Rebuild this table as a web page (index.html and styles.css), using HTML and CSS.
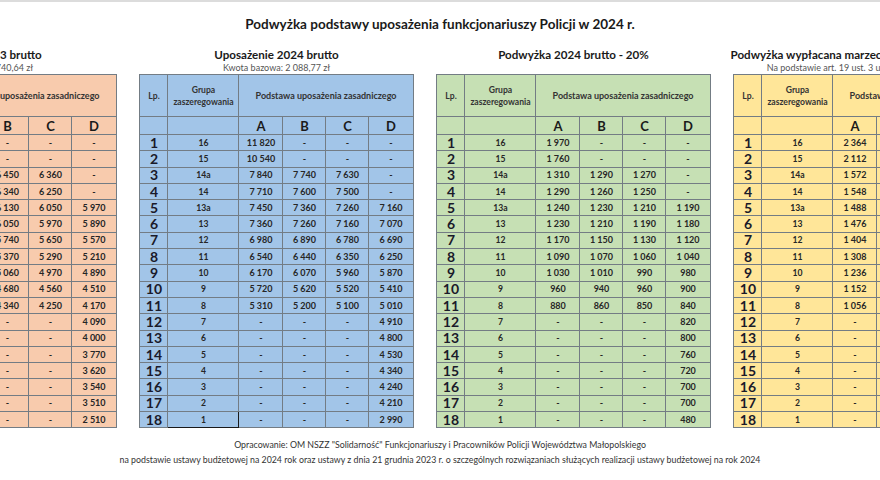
FILE: index.html
```html
<!DOCTYPE html>
<html lang="pl">
<head>
<meta charset="utf-8">
<title>Podwyżka podstawy uposażenia funkcjonariuszy Policji w 2024 r.</title>
<link rel="stylesheet" href="styles.css">
</head>
<body>
<div class="page">
  <h1 class="title">Podwyżka podstawy uposażenia funkcjonariuszy Policji w 2024 r.</h1>
  <div class="tables">
    <section class="block orange">
      <h2 class="caption">Uposażenie 2023 brutto</h2>
      <p class="sub">Kwota bazowa: 1 740,64 zł</p>
      <table class="grid">
        <colgroup><col class="c-lp"><col class="c-gr"><col class="c-a"><col class="c-b"><col class="c-c"><col class="c-d"></colgroup>
        <thead>
          <tr class="h1"><th>Lp.</th><th>Grupa zaszeregowania</th><th colspan="4">Podstawa uposażenia zasadniczego</th></tr>
          <tr class="h2"><th></th><th></th><th>A</th><th>B</th><th>C</th><th>D</th></tr>
        </thead>
        <tbody>
          <tr><td class="lp">1</td><td class="gr">16</td><td>9 850</td><td>-</td><td>-</td><td>-</td></tr>
          <tr><td class="lp">2</td><td class="gr">15</td><td>8 780</td><td>-</td><td>-</td><td>-</td></tr>
          <tr><td class="lp">3</td><td class="gr">14a</td><td>6 530</td><td>6 450</td><td>6 360</td><td>-</td></tr>
          <tr><td class="lp">4</td><td class="gr">14</td><td>6 430</td><td>6 340</td><td>6 250</td><td>-</td></tr>
          <tr><td class="lp">5</td><td class="gr">13a</td><td>6 210</td><td>6 130</td><td>6 050</td><td>5 970</td></tr>
          <tr><td class="lp">6</td><td class="gr">13</td><td>6 130</td><td>6 050</td><td>5 970</td><td>5 890</td></tr>
          <tr><td class="lp">7</td><td class="gr">12</td><td>5 820</td><td>5 740</td><td>5 650</td><td>5 570</td></tr>
          <tr><td class="lp">8</td><td class="gr">11</td><td>5 450</td><td>5 370</td><td>5 290</td><td>5 210</td></tr>
          <tr><td class="lp">9</td><td class="gr">10</td><td>5 140</td><td>5 060</td><td>4 970</td><td>4 890</td></tr>
          <tr><td class="lp">10</td><td class="gr">9</td><td>4 770</td><td>4 680</td><td>4 560</td><td>4 510</td></tr>
          <tr><td class="lp">11</td><td class="gr">8</td><td>4 430</td><td>4 340</td><td>4 250</td><td>4 170</td></tr>
          <tr><td class="lp">12</td><td class="gr">7</td><td>-</td><td>-</td><td>-</td><td>4 090</td></tr>
          <tr><td class="lp">13</td><td class="gr">6</td><td>-</td><td>-</td><td>-</td><td>4 000</td></tr>
          <tr><td class="lp">14</td><td class="gr">5</td><td>-</td><td>-</td><td>-</td><td>3 770</td></tr>
          <tr><td class="lp">15</td><td class="gr">4</td><td>-</td><td>-</td><td>-</td><td>3 620</td></tr>
          <tr><td class="lp">16</td><td class="gr">3</td><td>-</td><td>-</td><td>-</td><td>3 540</td></tr>
          <tr><td class="lp">17</td><td class="gr">2</td><td>-</td><td>-</td><td>-</td><td>3 510</td></tr>
          <tr><td class="lp">18</td><td class="gr">1</td><td>-</td><td>-</td><td>-</td><td>2 510</td></tr>
        </tbody>
      </table>
    </section>

    <section class="block blue">
      <h2 class="caption">Uposażenie 2024 brutto</h2>
      <p class="sub">Kwota bazowa: 2 088,77 zł</p>
      <table class="grid">
        <colgroup><col class="c-lp"><col class="c-gr"><col class="c-a"><col class="c-b"><col class="c-c"><col class="c-d"></colgroup>
        <thead>
          <tr class="h1"><th>Lp.</th><th>Grupa zaszeregowania</th><th colspan="4">Podstawa uposażenia zasadniczego</th></tr>
          <tr class="h2"><th></th><th></th><th>A</th><th>B</th><th>C</th><th>D</th></tr>
        </thead>
        <tbody>
          <tr><td class="lp">1</td><td class="gr">16</td><td>11 820</td><td>-</td><td>-</td><td>-</td></tr>
          <tr><td class="lp">2</td><td class="gr">15</td><td>10 540</td><td>-</td><td>-</td><td>-</td></tr>
          <tr><td class="lp">3</td><td class="gr">14a</td><td>7 840</td><td>7 740</td><td>7 630</td><td>-</td></tr>
          <tr><td class="lp">4</td><td class="gr">14</td><td>7 710</td><td>7 600</td><td>7 500</td><td>-</td></tr>
          <tr><td class="lp">5</td><td class="gr">13a</td><td>7 450</td><td>7 360</td><td>7 260</td><td>7 160</td></tr>
          <tr><td class="lp">6</td><td class="gr">13</td><td>7 360</td><td>7 260</td><td>7 160</td><td>7 070</td></tr>
          <tr><td class="lp">7</td><td class="gr">12</td><td>6 980</td><td>6 890</td><td>6 780</td><td>6 690</td></tr>
          <tr><td class="lp">8</td><td class="gr">11</td><td>6 540</td><td>6 440</td><td>6 350</td><td>6 250</td></tr>
          <tr><td class="lp">9</td><td class="gr">10</td><td>6 170</td><td>6 070</td><td>5 960</td><td>5 870</td></tr>
          <tr><td class="lp">10</td><td class="gr">9</td><td>5 720</td><td>5 620</td><td>5 520</td><td>5 410</td></tr>
          <tr><td class="lp">11</td><td class="gr">8</td><td>5 310</td><td>5 200</td><td>5 100</td><td>5 010</td></tr>
          <tr><td class="lp">12</td><td class="gr">7</td><td>-</td><td>-</td><td>-</td><td>4 910</td></tr>
          <tr><td class="lp">13</td><td class="gr">6</td><td>-</td><td>-</td><td>-</td><td>4 800</td></tr>
          <tr><td class="lp">14</td><td class="gr">5</td><td>-</td><td>-</td><td>-</td><td>4 530</td></tr>
          <tr><td class="lp">15</td><td class="gr">4</td><td>-</td><td>-</td><td>-</td><td>4 340</td></tr>
          <tr><td class="lp">16</td><td class="gr">3</td><td>-</td><td>-</td><td>-</td><td>4 240</td></tr>
          <tr><td class="lp">17</td><td class="gr">2</td><td>-</td><td>-</td><td>-</td><td>4 210</td></tr>
          <tr><td class="lp">18</td><td class="gr selected">1</td><td>-</td><td>-</td><td>-</td><td>2 990</td></tr>
        </tbody>
      </table>
    </section>

    <section class="block green">
      <h2 class="caption">Podwyżka 2024 brutto - 20%</h2>
      <p class="sub"></p>
      <table class="grid">
        <colgroup><col class="c-lp"><col class="c-gr"><col class="c-a"><col class="c-b"><col class="c-c"><col class="c-d"></colgroup>
        <thead>
          <tr class="h1"><th>Lp.</th><th>Grupa zaszeregowania</th><th colspan="4">Podstawa uposażenia zasadniczego</th></tr>
          <tr class="h2"><th></th><th></th><th>A</th><th>B</th><th>C</th><th>D</th></tr>
        </thead>
        <tbody>
          <tr><td class="lp">1</td><td class="gr">16</td><td>1 970</td><td>-</td><td>-</td><td>-</td></tr>
          <tr><td class="lp">2</td><td class="gr">15</td><td>1 760</td><td>-</td><td>-</td><td>-</td></tr>
          <tr><td class="lp">3</td><td class="gr">14a</td><td>1 310</td><td>1 290</td><td>1 270</td><td>-</td></tr>
          <tr><td class="lp">4</td><td class="gr">14</td><td>1 290</td><td>1 260</td><td>1 250</td><td>-</td></tr>
          <tr><td class="lp">5</td><td class="gr">13a</td><td>1 240</td><td>1 230</td><td>1 210</td><td>1 190</td></tr>
          <tr><td class="lp">6</td><td class="gr">13</td><td>1 230</td><td>1 210</td><td>1 190</td><td>1 180</td></tr>
          <tr><td class="lp">7</td><td class="gr">12</td><td>1 170</td><td>1 150</td><td>1 130</td><td>1 120</td></tr>
          <tr><td class="lp">8</td><td class="gr">11</td><td>1 090</td><td>1 070</td><td>1 060</td><td>1 040</td></tr>
          <tr><td class="lp">9</td><td class="gr">10</td><td>1 030</td><td>1 010</td><td>990</td><td>980</td></tr>
          <tr><td class="lp">10</td><td class="gr">9</td><td>960</td><td>940</td><td>960</td><td>900</td></tr>
          <tr><td class="lp">11</td><td class="gr">8</td><td>880</td><td>860</td><td>850</td><td>840</td></tr>
          <tr><td class="lp">12</td><td class="gr">7</td><td>-</td><td>-</td><td>-</td><td>820</td></tr>
          <tr><td class="lp">13</td><td class="gr">6</td><td>-</td><td>-</td><td>-</td><td>800</td></tr>
          <tr><td class="lp">14</td><td class="gr">5</td><td>-</td><td>-</td><td>-</td><td>760</td></tr>
          <tr><td class="lp">15</td><td class="gr">4</td><td>-</td><td>-</td><td>-</td><td>720</td></tr>
          <tr><td class="lp">16</td><td class="gr">3</td><td>-</td><td>-</td><td>-</td><td>700</td></tr>
          <tr><td class="lp">17</td><td class="gr">2</td><td>-</td><td>-</td><td>-</td><td>700</td></tr>
          <tr><td class="lp">18</td><td class="gr">1</td><td>-</td><td>-</td><td>-</td><td>480</td></tr>
        </tbody>
      </table>
    </section>

    <section class="block yellow">
      <h2 class="caption">Podwyżka wypłacana marzec-grudzień 2024 r. (brutto)</h2>
      <p class="sub">Na podstawie art. 19 ust. 3 ustawy okołobudżetowej</p>
      <table class="grid">
        <colgroup><col class="c-lp"><col class="c-gr"><col class="c-a"><col class="c-b"><col class="c-c"><col class="c-d"></colgroup>
        <thead>
          <tr class="h1"><th>Lp.</th><th>Grupa zaszeregowania</th><th colspan="4">Podstawa uposażenia zasadniczego</th></tr>
          <tr class="h2"><th></th><th></th><th>A</th><th>B</th><th>C</th><th>D</th></tr>
        </thead>
        <tbody>
          <tr><td class="lp">1</td><td class="gr">16</td><td>2 364</td><td>-</td><td>-</td><td>-</td></tr>
          <tr><td class="lp">2</td><td class="gr">15</td><td>2 112</td><td>-</td><td>-</td><td>-</td></tr>
          <tr><td class="lp">3</td><td class="gr">14a</td><td>1 572</td><td>1 548</td><td>1 524</td><td>-</td></tr>
          <tr><td class="lp">4</td><td class="gr">14</td><td>1 548</td><td>1 512</td><td>1 500</td><td>-</td></tr>
          <tr><td class="lp">5</td><td class="gr">13a</td><td>1 488</td><td>1 476</td><td>1 452</td><td>1 428</td></tr>
          <tr><td class="lp">6</td><td class="gr">13</td><td>1 476</td><td>1 452</td><td>1 428</td><td>1 416</td></tr>
          <tr><td class="lp">7</td><td class="gr">12</td><td>1 404</td><td>1 380</td><td>1 356</td><td>1 344</td></tr>
          <tr><td class="lp">8</td><td class="gr">11</td><td>1 308</td><td>1 284</td><td>1 272</td><td>1 248</td></tr>
          <tr><td class="lp">9</td><td class="gr">10</td><td>1 236</td><td>1 212</td><td>1 188</td><td>1 176</td></tr>
          <tr><td class="lp">10</td><td class="gr">9</td><td>1 152</td><td>1 128</td><td>1 152</td><td>1 080</td></tr>
          <tr><td class="lp">11</td><td class="gr">8</td><td>1 056</td><td>1 032</td><td>1 020</td><td>1 008</td></tr>
          <tr><td class="lp">12</td><td class="gr">7</td><td>-</td><td>-</td><td>-</td><td>984</td></tr>
          <tr><td class="lp">13</td><td class="gr">6</td><td>-</td><td>-</td><td>-</td><td>960</td></tr>
          <tr><td class="lp">14</td><td class="gr">5</td><td>-</td><td>-</td><td>-</td><td>912</td></tr>
          <tr><td class="lp">15</td><td class="gr">4</td><td>-</td><td>-</td><td>-</td><td>864</td></tr>
          <tr><td class="lp">16</td><td class="gr">3</td><td>-</td><td>-</td><td>-</td><td>840</td></tr>
          <tr><td class="lp">17</td><td class="gr">2</td><td>-</td><td>-</td><td>-</td><td>840</td></tr>
          <tr><td class="lp">18</td><td class="gr">1</td><td>-</td><td>-</td><td>-</td><td>576</td></tr>
        </tbody>
      </table>
    </section>
  </div>
  <footer class="footer">
    <p>Opracowanie: OM NSZZ "Solidarność" Funkcjonariuszy i Pracowników Policji Województwa Małopolskiego</p>
    <p>na podstawie ustawy budżetowej na 2024 rok oraz ustawy z dnia 21 grudnia 2023 r. o szczególnych rozwiązaniach służących realizacji ustawy budżetowej na rok 2024</p>
  </footer>
</div>
</body>
</html>
```

FILE: styles.css
```css
html, body {
  margin: 0;
  padding: 0;
  background: #ffffff;
}
body {
  width: 880px;
  height: 480px;
  overflow: hidden;
  font-family: Lato, "Open Sans", "Liberation Sans", sans-serif;
  color: #1e1e1e;
}
.page {
  border-top: 2px solid #dcdcdc;
  height: 478px;
  display: flex;
  flex-direction: column;
}
.title {
  margin: 13px 0 0 0;
  text-align: center;
  font-size: 13.5px;
  font-weight: 700;
  line-height: 18px;
  color: #1a1a1a;
}
.tables {
  display: flex;
  gap: 24px;
  margin: 14px 0 0 -157px;
}
.block {
  flex: none;
  width: 273px;
  display: flex;
  flex-direction: column;
  align-items: center;
}
.caption {
  margin: 0;
  white-space: nowrap;
  font-size: 11.6px;
  font-weight: 700;
  line-height: 15px;
  color: #1a1a1a;
}
.sub {
  margin: 0;
  height: 12px;
  white-space: nowrap;
  font-size: 9px;
  line-height: 12px;
  color: #555;
}
.grid {
  margin-top: 0;
  width: 273px;
  table-layout: fixed;
  border-collapse: collapse;
  border: 1px solid #66727a;
}
.c-lp { width: 28px; }
.c-gr { width: 71px; }
.c-a { width: 44px; }
.c-b { width: 43px; }
.c-c { width: 43px; }
.c-d { width: 44px; }
.grid th, .grid td {
  border: 1px solid #737c84;
  padding: 0;
  text-align: center;
  vertical-align: middle;
  overflow: hidden;
  white-space: nowrap;
}
.grid .h1 { height: 42px; }
.grid .h1 th {
  font-size: 8.6px;
  font-weight: 700;
  line-height: 12px;
  color: #333;
  white-space: normal;
}
.grid .h1 th:last-child { font-size: 9px; }
.grid .h2 { height: 18px; }
.grid .h2 th {
  font-size: 13px;
  font-weight: 700;
  line-height: 14px;
  color: #1a1a1a;
}
.grid tbody tr { height: 16.3px; }
.grid td {
  font-size: 9px;
  font-weight: 700;
  line-height: 12px;
  color: #262626;
}
.grid td.lp {
  font-size: 14px;
  line-height: 14px;
  color: #1a1a2a;
}
.grid td.gr { font-size: 8.6px; }
.grid td.selected { border: 1px solid #1a1a1a; }

.orange .grid, .orange .grid th, .orange .grid td { background: #f8cbad; }
.blue .grid, .blue .grid th, .blue .grid td { background: #a2c5e8; }
.green .grid, .green .grid th, .green .grid td { background: #c6e0b4; }
.yellow .grid, .yellow .grid th, .yellow .grid td { background: #ffe699; }

.footer {
  margin-top: 9px;
  text-align: center;
  font-size: 8.8px;
  line-height: 15px;
  color: #333;
}
.footer p { margin: 0; white-space: nowrap; }
```
